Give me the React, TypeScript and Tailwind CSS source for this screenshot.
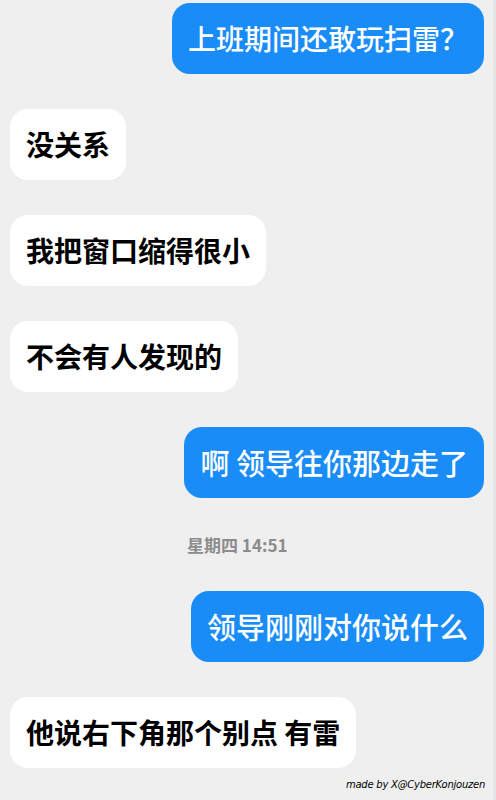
import React from 'react';

type Msg = { from: 'me' | 'them' | 'time'; text: string; big?: boolean };

const messages: Msg[] = [
  { from: 'me', text: '上班期间还敢玩扫雷？' },
  { from: 'them', text: '没关系' },
  { from: 'them', text: '我把窗口缩得很小' },
  { from: 'them', text: '不会有人发现的' },
  { from: 'me', text: '啊 领导往你那边走了', big: true },
  { from: 'time', text: '星期四 14:51' },
  { from: 'me', text: '领导刚刚对你说什么', big: true },
  { from: 'them', text: '他说右下角那个别点 有雷' },
];

const cjk = { fontFamily: '"Noto Sans CJK SC", "Noto Sans", sans-serif' };

const Bubble: React.FC<{ mine: boolean; text: string; big?: boolean }> = ({ mine, text, big }) => (
  <div className={mine ? 'flex justify-end' : 'flex justify-start'}>
    <div
      style={cjk}
      className={
        mine
          ? big
            ? 'rounded-[18px] bg-[#1a8cf8] px-4 py-4 text-[29px] leading-[39px] font-medium text-white whitespace-pre'
            : 'rounded-[18px] bg-[#1a8cf8] px-4 py-4 text-[28px] leading-[39px] font-medium text-white whitespace-pre'
          : 'rounded-[18px] bg-white px-4 py-4 text-[28px] leading-[39px] font-bold text-black whitespace-pre'
      }
    >
      {text}
    </div>
  </div>
);

export default function App() {
  return (
    <div className="relative w-[496px] h-[800px] overflow-hidden bg-[#efefef] border-r-[3px] border-[#e4e4e4]">
      <div className="flex flex-col gap-[35px] pt-[3px] pl-[10px] pr-[9px]">
        {messages.map((m, i) =>
          m.from === 'time' ? (
            <div
              key={i}
              style={cjk}
              className="pl-[177px] my-[1px] text-[17px] leading-[21px] font-bold text-[#8c8c8c]"
            >
              {m.text}
            </div>
          ) : (
            <Bubble key={i} mine={m.from === 'me'} text={m.text} big={m.big} />
          )
        )}
      </div>
      <div
        className="absolute right-[8px] bottom-[8px] text-[10px] italic tracking-tight text-black"
        style={{ fontFamily: '"DejaVu Sans", sans-serif' }}
      >
        made by X@CyberKonjouzen
      </div>
    </div>
  );
}
